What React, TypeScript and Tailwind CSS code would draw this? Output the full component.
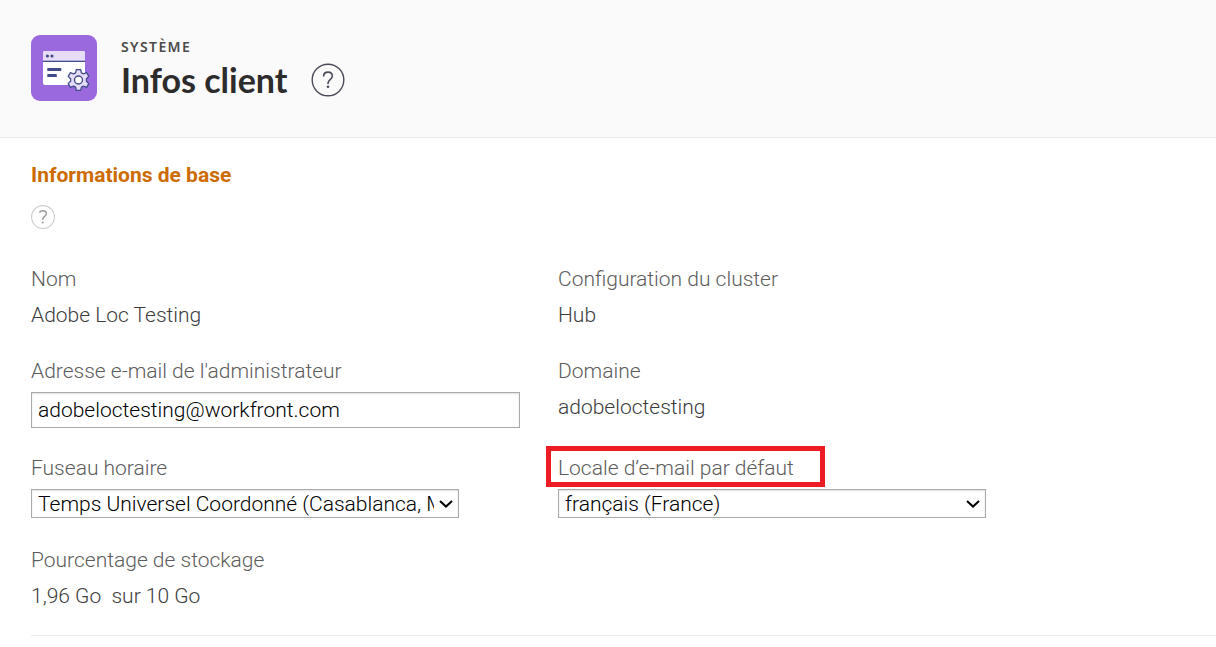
import { useState } from "react";
import type { ReactNode } from "react";

function SystemIcon() {
  return (
    <svg viewBox="0 0 66 66" className="size-[66px] shrink-0" aria-hidden="true">
      <rect width="66" height="66" rx="9" fill="#9b69de" />
      <rect x="12" y="16" width="42" height="34" rx="2" fill="#fff" />
      <path d="M14 16h38a2 2 0 0 1 2 2v8H12v-8a2 2 0 0 1 2-2z" fill="#e6dcf8" />
      <rect x="12" y="25.7" width="42" height="1.3" fill="#424c8c" />
      <circle cx="16.4" cy="21" r="1.6" fill="#424c8c" />
      <circle cx="21" cy="21" r="1.6" fill="#424c8c" />
      <rect x="16.3" y="33" width="14" height="3" rx="0.6" fill="#424c8c" />
      <rect x="16.3" y="39" width="9.5" height="3" rx="0.6" fill="#424c8c" />
      <path
        d="M45.3 34.6h4.4l.7 3.3 2 1 3.2-1.2 2.2 3.7-2.4 2.4v2.4l2.4 2.4-2.2 3.7-3.2-1.2-2 1-.7 3.3h-4.4l-.7-3.3-2-1-3.2 1.2-2.2-3.7 2.4-2.4v-2.4l-2.4-2.4 2.2-3.7 3.2 1.2 2-1z"
        fill="#e6dcf8"
        stroke="#424c8c"
        strokeWidth="1.3"
        strokeLinejoin="round"
      />
      <circle cx="47.5" cy="45" r="4" fill="#fff" stroke="#424c8c" strokeWidth="1.4" />
    </svg>
  );
}

function Field({ label, htmlFor, marked, children }: { label: string; htmlFor?: string; marked?: boolean; children: ReactNode }) {
  return (
    <div className="min-w-0 leading-9">
      <div className="relative text-[#5c5c5c]">
        {htmlFor ? <label htmlFor={htmlFor}>{label}</label> : <span>{label}</span>}
        {marked && <span className="pointer-events-none absolute -top-1 -left-3 h-[41px] w-[279px] border-5 border-[#ed1c24]" />}
      </div>
      {children}
    </div>
  );
}

function Select({ id, options }: { id: string; options: string[] }) {
  return (
    <div className="relative mt-[3px] mb-1 max-w-[428px]">
      <select
        id={id}
        className="block h-[29px] w-full appearance-none overflow-hidden border border-[#aaa] bg-white pr-6 pl-1.5 leading-6 text-black shadow-[inset_0_1px_2px_rgba(0,0,0,0.12)]"
      >
        {options.map((o) => (
          <option key={o}>{o}</option>
        ))}
      </select>
      <svg viewBox="0 0 14 8" className="pointer-events-none absolute top-[11px] right-1.5 h-2 w-3.5" fill="none" stroke="#000" strokeWidth="2">
        <path d="M1 1l6 5.6L13 1" />
      </svg>
    </div>
  );
}

export default function App() {
  const [email, setEmail] = useState("adobeloctesting@workfront.com");
  return (
    <div className="min-h-screen bg-white font-['Roboto','Liberation_Sans',sans-serif] text-[21px] font-light text-[#3c3c3c]">
      <header className="flex gap-6 border-b border-[#e8e8e8] bg-[#fafafa] px-[31px] pt-[35px] pb-9">
        <SystemIcon />
        <div>
          <p className="font-['Noto_Sans','Open_Sans',sans-serif] text-[14px] leading-6 font-semibold tracking-widest text-[#4b4b4b]">SYSTÈME</p>
          <div className="flex items-center gap-6">
            <h1 className="font-['Lato','Noto_Sans',sans-serif] text-[34px] leading-[42px] font-bold text-[#2c2c2c]">Infos client</h1>
            <button type="button" aria-label="Aide" className="text-[#4a4b58]">
              <svg viewBox="0 0 34 34" className="size-[34px]" fill="none" stroke="currentColor" strokeWidth="1.4">
                <circle cx="17" cy="17" r="15.8" />
                <path d="M12.6 13.4c0-2.8 1.9-4.3 4.4-4.3s4.3 1.5 4.3 4c0 3.5-4.3 3.6-4.3 7.2v.6" strokeWidth="1.6" />
                <circle cx="17" cy="23.7" r="1.3" fill="currentColor" stroke="none" />
              </svg>
            </button>
          </div>
        </div>
      </header>

      <main className="pt-[19px] pl-[31px]">
        <h2 className="leading-9 font-bold text-[#cc6c00]">Informations de base</h2>
        <button type="button" aria-label="Aide sur les informations de base" className="mt-3 block text-[#999]">
          <svg viewBox="0 0 24 24" className="size-6" fill="none">
            <circle cx="12" cy="12" r="11.4" stroke="#ccc" strokeWidth="1.1" />
            <path d="M8.4 7.5c.8-1.2 2-1.8 3.4-1.8 2.2 0 3.6 1.1 3.6 2.9 0 2.8-3.7 2.8-3.7 5.8v.5" stroke="currentColor" strokeWidth="1.4" />
            <circle cx="11.7" cy="17.4" r="1" fill="currentColor" />
          </svg>
        </button>

        <div className="mt-8 border-b border-[#ececec] pb-[21px]">
          <div className="grid max-w-[1054px] grid-cols-2 gap-y-5">
            <Field label="Nom">
              <p>Adobe Loc Testing</p>
            </Field>
            <Field label="Configuration du cluster">
              <p>Hub</p>
            </Field>
            <Field label="Adresse e-mail de l'administrateur" htmlFor="email">
              <input
                id="email"
                type="email"
                value={email}
                onChange={(e) => setEmail(e.target.value)}
                className="mt-[3px] mb-0.5 block h-9 w-full max-w-[489px] border border-[#aaa] bg-white px-1.5 text-black shadow-[inset_0_1px_2px_rgba(0,0,0,0.12)]"
              />
            </Field>
            <Field label="Domaine">
              <p>adobeloctesting</p>
            </Field>
            <Field label="Fuseau horaire" htmlFor="timezone">
              <Select id="timezone" options={["Temps Universel Coordonné (Casablanca, Monrovia)"]} />
            </Field>
            <Field label="Locale d’e-mail par défaut" htmlFor="locale" marked>
              <Select id="locale" options={["français (France)"]} />
            </Field>
            <Field label="Pourcentage de stockage">
              <p className="whitespace-pre">1,96 Go  sur 10 Go</p>
            </Field>
          </div>
        </div>
      </main>
    </div>
  );
}
